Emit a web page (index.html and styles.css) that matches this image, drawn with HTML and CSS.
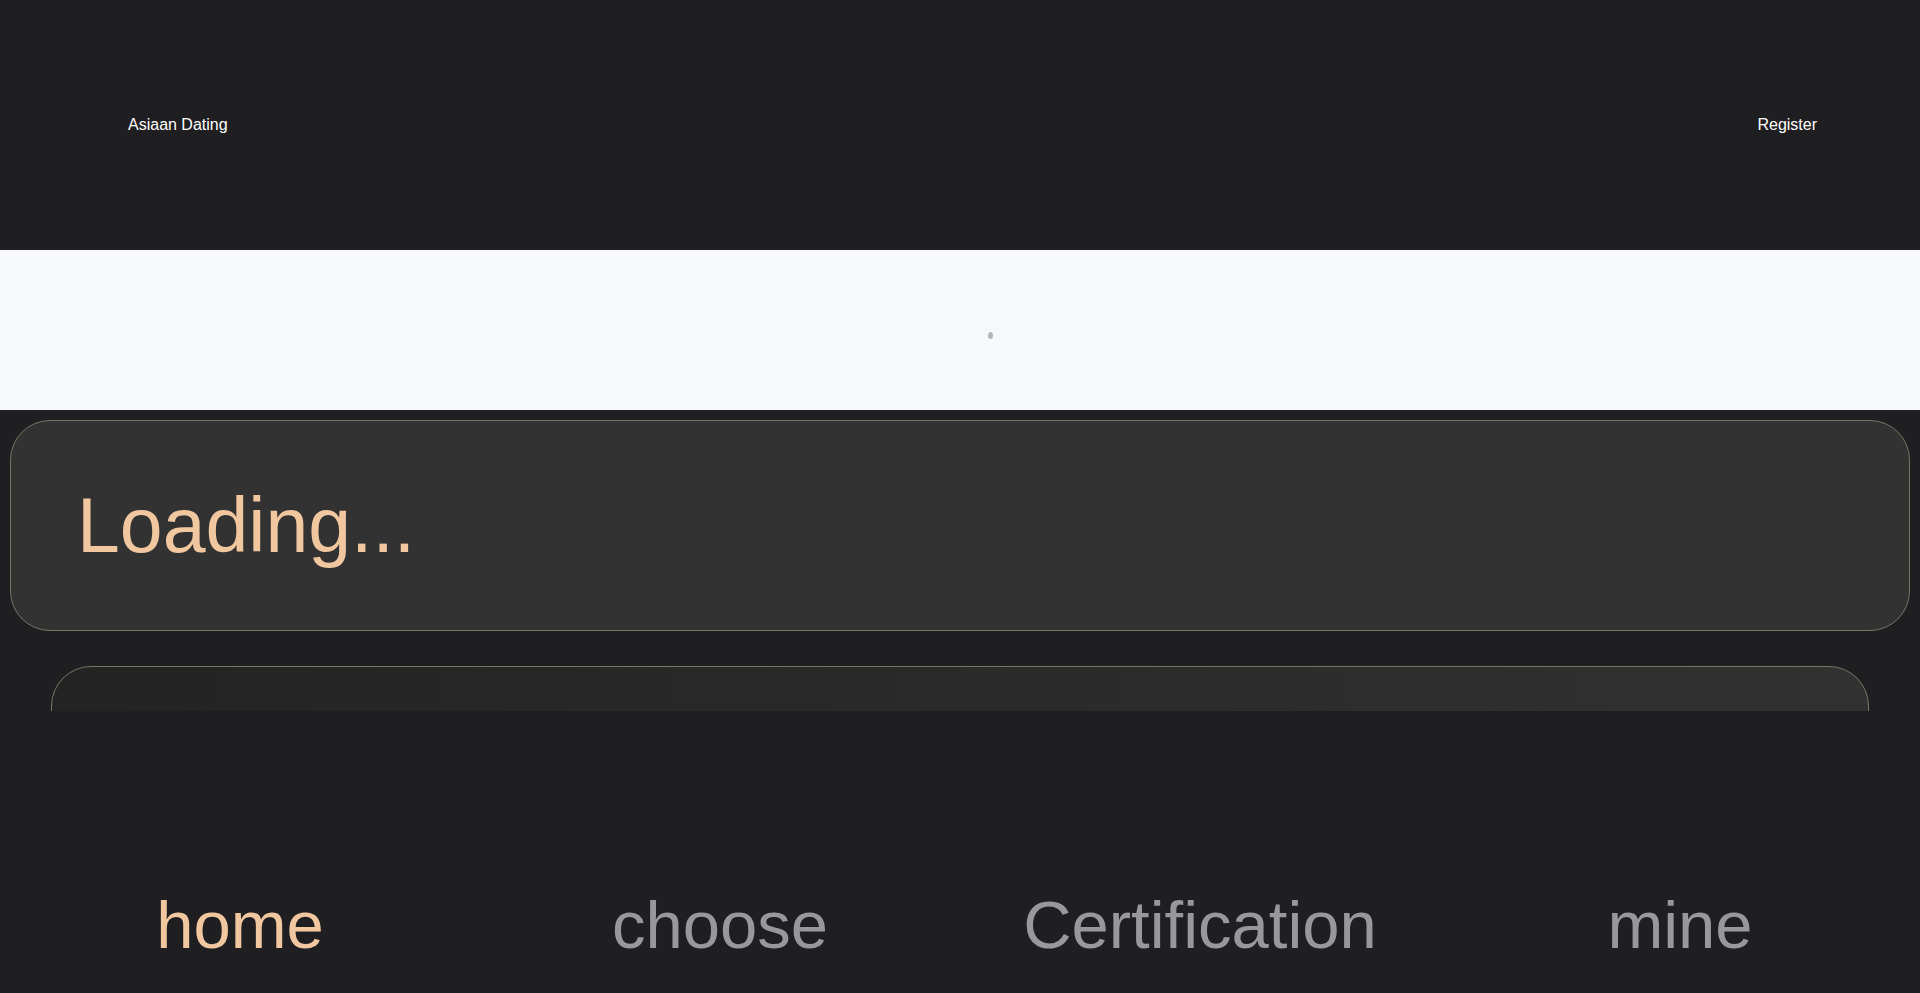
FILE: index.html
```html
<!DOCTYPE html>
<html lang="en">
<head>
<meta charset="utf-8">
<title>Asiaan Dating</title>
<link rel="stylesheet" href="styles.css">
</head>
<body>
<div class="page">
  <header class="topbar">
    <span class="brand">Asiaan Dating</span>
    <span class="register">Register</span>
  </header>
  <section class="banner">
    <span class="spinner"></span>
  </section>
  <main class="content">
    <div class="card">
      <h1 class="loading">Loading...</h1>
    </div>
    <div class="list">
      <div class="skeleton"></div>
    </div>
  </main>
  <nav class="tabbar">
    <span class="tab tab--active">home</span>
    <span class="tab">choose</span>
    <span class="tab">Certification</span>
    <span class="tab">mine</span>
  </nav>
</div>
</body>
</html>
```

FILE: styles.css
```css
* { box-sizing: border-box; }
html, body {
  margin: 0;
  padding: 0;
  height: 993px;
  overflow: hidden;
  background: #1f1e21;
  font-family: "Liberation Sans", Arial, sans-serif;
}
.page {
  height: 993px;
  display: flex;
  flex-direction: column;
}
.topbar {
  height: 250px;
  flex: none;
  display: flex;
  align-items: center;
  justify-content: space-between;
  padding: 0 103px 0 128px;
  color: #ffffff;
  font-size: 16px;
  background: #1f1e21;
}
.banner {
  height: 160px;
  flex: none;
  background: #f7f8fa;
  display: flex;
  justify-content: center;
  align-items: flex-start;
  padding: 82px 0 0 60px;
}
.spinner {
  width: 5px;
  height: 7px;
  border-radius: 50%;
  background: #b4b5b9;
  filter: blur(0.6px);
}
.content {
  flex: none;
  padding: 10px 10px 0;
}
.card {
  height: 211px;
  border: 1px solid #7a7462;
  border-radius: 40px;
  background: #333232;
  display: flex;
  align-items: center;
  padding: 0 0 0 66px;
}
.loading {
  margin: 0;
  font-weight: 400;
  font-size: 77px;
  color: #f1c7a0;
}
.list {
  margin: 35px -10px 0;
  height: 45px;
  overflow: hidden;
  padding: 0 51px;
}
.skeleton {
  height: 200px;
  border: 1px solid #7a7462;
  border-radius: 40px;
  background: linear-gradient(90deg, #232323 0%, #2a2a2a 50%, #313131 100%);
}
.tabbar {
  margin-top: auto;
  flex: none;
  display: grid;
  grid-template-columns: repeat(4, 1fr);
  padding: 0 0 30px;
  font-size: 67px;
  color: #98979c;
  white-space: nowrap;
}
.tab { text-align: center; }
.tab--active { color: #f1c7a0; }
```
